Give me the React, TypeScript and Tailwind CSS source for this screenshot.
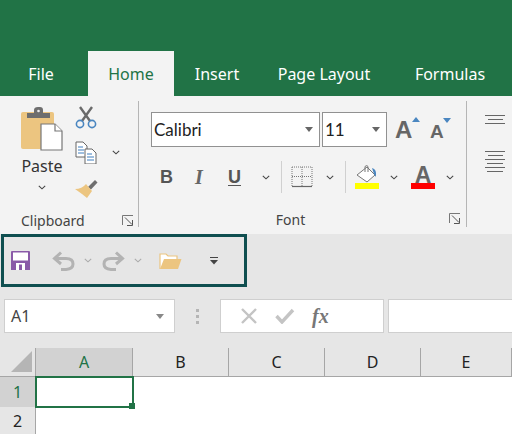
import React from "react";

const uiFont = "font-['Noto_Sans','Open_Sans',sans-serif]";

function Chevron({ className = "", color = "#444" }: { className?: string; color?: string }) {
  return (
    <svg width="8" height="5" viewBox="0 0 8 5" className={className}>
      <path d="M0.8 0.8 L4 3.8 L7.2 0.8" fill="none" stroke={color} strokeWidth="1.1" />
    </svg>
  );
}

function Launcher({ className = "" }: { className?: string }) {
  return (
    <svg width="12" height="11" viewBox="0 0 12 11" className={className}>
      <path d="M0.5 10 V0.5 H11" fill="none" stroke="#777" />
      <path d="M3 2.5 L10 9.5 M10.5 5 V10.5 H5" fill="none" stroke="#555" />
    </svg>
  );
}

function PasteIcon() {
  return (
    <svg width="44" height="46" viewBox="0 0 44 46">
      <rect x="1" y="6" width="33" height="37" rx="2" fill="#ecc580" />
      <path d="M7 12 V7 H14 V4 Q14 1 18 1 H20 Q23 1 23 4 V7 H30 V12 Z" fill="#6e6e6e" />
      <circle cx="18.5" cy="5" r="1.3" fill="#eee" />
      <path d="M21 18 H35 L42 25 V44 H21 Z" fill="#fff" stroke="#777" strokeWidth="1.2" />
      <path d="M35 18 V25 H42" fill="#fff" stroke="#777" strokeWidth="1.2" />
    </svg>
  );
}

function ScissorsIcon() {
  return (
    <svg width="22" height="23" viewBox="0 0 22 23">
      <path d="M5 1 L15 15 M17 1 L7 15" stroke="#6a6a6a" strokeWidth="2.4" fill="none" />
      <circle cx="5" cy="18" r="3.6" fill="none" stroke="#4a86c0" strokeWidth="1.6" />
      <circle cx="17" cy="18" r="3.6" fill="none" stroke="#4a86c0" strokeWidth="1.6" />
    </svg>
  );
}

function CopyIcon() {
  return (
    <svg width="22" height="23" viewBox="0 0 22 23">
      <path d="M1 1 H8 L12 5 V16 H1 Z" fill="#fff" stroke="#666" />
      <path d="M3 6 H8 M3 9 H9 M3 12 H9" stroke="#3f7fbf" />
      <path d="M10 8 H17 L21 12 V23 H10 Z" fill="#fff" stroke="#666" />
      <path d="M12 13 H17 M12 16 H19 M12 19 H19" stroke="#3f7fbf" />
    </svg>
  );
}

function BrushIcon() {
  return (
    <svg width="24" height="21" viewBox="0 0 24 21">
      <path d="M14 9 L21 2 L23.5 4.5 L17 11.5 Z" fill="#6e6e6e" />
      <path d="M12 6 L18 13 L13 20 L8 16 L1 11 Q8 11 12 6 Z" fill="#ecc580" />
    </svg>
  );
}

function GrowFont({ down = false }: { down?: boolean }) {
  return (
    <div className="flex items-start">
      <span className={`font-['Liberation_Sans',sans-serif] font-bold text-[#666] leading-none ${down ? "text-[19px] mt-[3px]" : "text-[24px]"}`}>A</span>
      <svg width="8" height="5" viewBox="0 0 8 5" className={down ? "-ml-px -mt-px" : "mt-[-1px]"}>
        <path d={down ? "M0 0 H8 L4 5 Z" : "M0 5 H8 L4 0 Z"} fill="#4a86c0" />
      </svg>
    </div>
  );
}

function BorderIcon() {
  return (
    <svg width="22" height="22" viewBox="0 0 22 22">
      <path d="M1 1 H21 V20 M1 1 V20 M11 1 V20 M1 10.5 H21" fill="none" stroke="#777" strokeDasharray="1 1" />
      <path d="M1 20.5 H21" stroke="#666" strokeWidth="1.2" />
    </svg>
  );
}

function FillIcon() {
  return (
    <div className="flex w-6 flex-col">
      <svg width="24" height="18" viewBox="0 0 24 18">
        <path d="M2 10 L12 2 L20 10 L12 17 Z" fill="#fff" stroke="#777" />
        <path d="M10 7 V1.5 Q12 -0.5 13 1.5 V7" fill="none" stroke="#777" />
        <path d="M17 3 Q22 4 21 12 L19 9 Z" fill="#4a86c0" />
      </svg>
      <div className="h-[6px] bg-[#ffff00]" />
    </div>
  );
}

function FontColorIcon() {
  return (
    <div className="flex w-6 flex-col items-center">
      <span className="h-[18px] font-['Liberation_Sans',sans-serif] text-[23px] font-bold leading-[21px] text-[#666]">A</span>
      <div className="h-[6px] w-6 bg-[#ff0000]" />
    </div>
  );
}

function SaveIcon() {
  return (
    <svg width="19" height="19" viewBox="0 0 19 19">
      <path d="M0 1 Q0 0 1 0 H18 Q19 0 19 1 V19 H0 Z" fill="#8a5aa8" />
      <rect x="2" y="1.5" width="15" height="8" fill="#fff" />
      <rect x="5" y="12" width="9" height="7" fill="#fff" />
      <rect x="8" y="13.5" width="3" height="5.5" fill="#8a5aa8" />
    </svg>
  );
}

function UndoIcon({ flip = false }: { flip?: boolean }) {
  return (
    <svg width="23" height="20" viewBox="0 0 23 20" className={flip ? "-scale-x-100" : ""}>
      <path d="M9 1.5 L2.5 7.5 L9 13" fill="none" stroke="#b3b3b3" strokeWidth="3" />
      <path d="M3 7.5 H14 Q21 7.5 21 13 Q21 18 14 18.5 H9" fill="none" stroke="#b3b3b3" strokeWidth="3" />
    </svg>
  );
}

function FolderIcon() {
  return (
    <svg width="23" height="18" viewBox="0 0 23 18">
      <path d="M1 17 V2 H7 L9 4 H18 V7" fill="#fff" stroke="#ecc580" strokeWidth="1.2" />
      <path d="M1 17 L5 7 H22.5 L19 17 Z" fill="#ecc580" />
    </svg>
  );
}

function AlignLines({ rows }: { rows: number[] }) {
  return (
    <div className="flex w-5 flex-col items-center gap-[3px]">
      {rows.map((w, i) => (
        <div key={i} className="h-px bg-[#666]" style={{ width: w }} />
      ))}
    </div>
  );
}

const columns = [
  { name: "A", width: "w-[97px]", active: true },
  { name: "B", width: "w-[96px]", active: false },
  { name: "C", width: "w-[96px]", active: false },
  { name: "D", width: "w-[96px]", active: false },
  { name: "E", width: "w-[91px]", active: false },
];

export default function App() {
  return (
    <div className={`h-[434px] w-[512px] overflow-hidden bg-[#e6e6e6] ${uiFont}`}>
      {/* title + tabs */}
      <div className="flex h-[96px] items-end bg-[#217346] text-[16px] text-white">
        <div className="flex h-[45px] w-[88px] items-center justify-center pr-[6px]">File</div>
        <div className="flex h-[45px] w-[86px] items-center justify-center bg-[#f3f3f3] text-[#217346]">Home</div>
        <div className="flex h-[45px] w-[86px] items-center justify-center">Insert</div>
        <div className="flex h-[45px] w-[128px] items-center justify-center">Page Layout</div>
        <div className="flex h-[45px] w-[124px] items-center justify-center whitespace-nowrap">Formulas</div>
      </div>

      {/* ribbon */}
      <div className="flex h-[138px] bg-[#f3f3f3] text-[#444]">
        {/* clipboard */}
        <div className="flex w-[138px] flex-col pb-[3px] pt-[10px]">
          <div className="flex h-[103px]">
            <div className="ml-[20px] flex w-[44px] flex-col items-center">
              <PasteIcon />
              <span className="mt-[2px] text-[16px] leading-[24px] text-[#333]">Paste</span>
              <Chevron className="mt-[7px]" />
            </div>
            <div className="ml-[11px] flex flex-col items-start">
              <ScissorsIcon />
              <div className="mt-[12px] flex items-center">
                <CopyIcon />
                <Chevron className="ml-[15px]" />
              </div>
              <div className="ml-[-1px] mt-[14px]"><BrushIcon /></div>
            </div>
          </div>
          <div className="flex flex-1 items-center pl-[21px] pr-[4px]">
            <span className="flex-1 text-[14px]">Clipboard</span>
            <Launcher />
          </div>
        </div>
        <div className="mt-[5px] h-[126px] w-px bg-[#b5b5b5]" />

        {/* font */}
        <div className="flex w-[327px] flex-col pb-[3px] pt-[16px]">
          <div className="flex h-[35px] items-center pl-[12px]">
            <div className="flex h-[35px] w-[169px] items-center justify-between border border-[#919191] bg-white pl-[2px] pr-[6px]">
              <span className="font-['Lato',sans-serif] text-[17px] text-[#222]">Calibri</span>
              <svg width="8" height="5" viewBox="0 0 8 5"><path d="M0 0 H8 L4 5 Z" fill="#666" /></svg>
            </div>
            <div className="ml-[2px] flex h-[35px] w-[65px] items-center justify-between border border-[#919191] bg-white pl-[2px] pr-[6px]">
              <span className="font-['Lato',sans-serif] text-[17px] text-[#222]">11</span>
              <svg width="8" height="5" viewBox="0 0 8 5"><path d="M0 0 H8 L4 5 Z" fill="#666" /></svg>
            </div>
            <div className="ml-[8px] w-[35px]"><GrowFont /></div>
            <GrowFont down />
          </div>
          <div className="mt-[14px] flex h-[32px] items-center pl-[21px]">
            <span className="w-[35px] font-['Liberation_Sans',sans-serif] text-[18px] font-bold text-[#555]">B</span>
            <span className="w-[33px] font-['Liberation_Serif',serif] text-[20px] font-bold italic text-[#666]">I</span>
            <span className="w-[34px] font-['Liberation_Sans',sans-serif] text-[18px] font-bold text-[#555] underline underline-offset-2">U</span>
            <Chevron />
            <div className="ml-[11px] h-[32px] w-px bg-[#d0d0d0]" />
            <div className="ml-[9px]"><BorderIcon /></div>
            <Chevron className="ml-[13px]" />
            <div className="ml-[11px] h-[32px] w-px bg-[#d0d0d0]" />
            <div className="ml-[9px]"><FillIcon /></div>
            <Chevron className="ml-[11px]" />
            <div className="ml-[13px]"><FontColorIcon /></div>
            <Chevron className="ml-[11px]" />
          </div>
          <div className="relative mt-auto flex h-[24px] items-center justify-center pr-[24px]">
            <span className="text-[14px]">Font</span>
            <Launcher className="absolute right-[5px] top-[6px]" />
          </div>
        </div>
        <div className="mt-[5px] h-[126px] w-px bg-[#b5b5b5]" />

        {/* alignment */}
        <div className="flex flex-col pl-[18px] pt-[19px]">
          <AlignLines rows={[20, 15, 20]} />
          <div className="mt-[27px]"><AlignLines rows={[20, 15, 20, 16, 20, 16]} /></div>
        </div>
      </div>

      {/* quick access toolbar */}
      <div className="flex h-[53px] w-[246px] items-center border-[3px] border-[#0f4f50] ml-px pl-[7px]">
        <SaveIcon />
        <div className="ml-[22px]"><UndoIcon /></div>
        <Chevron className="ml-[9px]" color="#aaa" />
        <div className="ml-[10px]"><UndoIcon flip /></div>
        <Chevron className="ml-[9px]" color="#aaa" />
        <div className="ml-[17px]"><FolderIcon /></div>
        <svg width="8" height="8" viewBox="0 0 8 8" className="ml-[28px]">
          <path d="M0 0.5 H8" stroke="#444" />
          <path d="M0 3 H8 L4 7.5 Z" fill="#444" />
        </svg>
      </div>

      {/* formula bar */}
      <div className="mt-[12px] flex h-[34px] items-stretch pl-[4px]">
        <div className="flex w-[171px] items-center justify-between border border-[#cfcfcf] bg-white pl-[6px] pr-[10px]">
          <span className="text-[16px] text-[#444]">A1</span>
          <svg width="8" height="5" viewBox="0 0 8 5"><path d="M0 0 H8 L4 5 Z" fill="#888" /></svg>
        </div>
        <div className="flex w-[45px] flex-col items-center justify-center gap-[3px]">
          <div className="size-[3px] bg-[#b5b5b5]" />
          <div className="size-[3px] bg-[#b5b5b5]" />
          <div className="size-[3px] bg-[#b5b5b5]" />
        </div>
        <div className="flex w-[164px] items-center border border-[#cfcfcf] bg-white">
          <svg width="18" height="18" viewBox="0 0 18 18" className="ml-[19px]">
            <path d="M2 2 L16 16 M16 2 L2 16" stroke="#c4c4c4" strokeWidth="2.4" />
          </svg>
          <svg width="20" height="16" viewBox="0 0 20 16" className="ml-[17px]">
            <path d="M1.5 8 L7 14 L18 2" fill="none" stroke="#c4c4c4" strokeWidth="3.4" />
          </svg>
          <span className="ml-[17px] font-['Liberation_Serif',serif] text-[20px] font-bold italic text-[#777]">fx</span>
        </div>
        <div className="ml-[4px] flex-1 border-y border-l border-[#cfcfcf] bg-white" />
      </div>

      {/* column headers */}
      <div className="mt-[15px] flex h-[29px] border-b border-[#a6a6a6]">
        <div className="flex w-[36px] items-end justify-end border-r border-[#a6a6a6] pb-[4px] pr-[3px]">
          <svg width="21" height="21" viewBox="0 0 21 21"><path d="M21 0 V21 H0 Z" fill="#b5b5b5" /></svg>
        </div>
        {columns.map((c) => (
          <div
            key={c.name}
            className={`flex ${c.width} items-center justify-center border-r border-[#a6a6a6] text-[16px] ${c.active ? "bg-[#d2d2d2] text-[#217346]" : "text-[#222]"}`}
          >
            {c.name}
          </div>
        ))}
      </div>

      {/* rows */}
      <div className="relative flex h-[57px] bg-white">
        <div className="w-[36px] border-r border-[#a6a6a6] bg-[#e6e6e6] text-[16px]">
          <div className="flex h-[30px] items-center justify-center bg-[#d2d2d2] text-[#217346]">1</div>
          <div className="flex h-[27px] items-center justify-center text-[#222]">2</div>
        </div>
        <div className="absolute left-[35px] top-[-1px] h-[32px] w-[99px] border-2 border-[#217346]" />
        <div className="absolute left-[129px] top-[26px] size-[6px] border-0 bg-[#217346]" />
      </div>
    </div>
  );
}
